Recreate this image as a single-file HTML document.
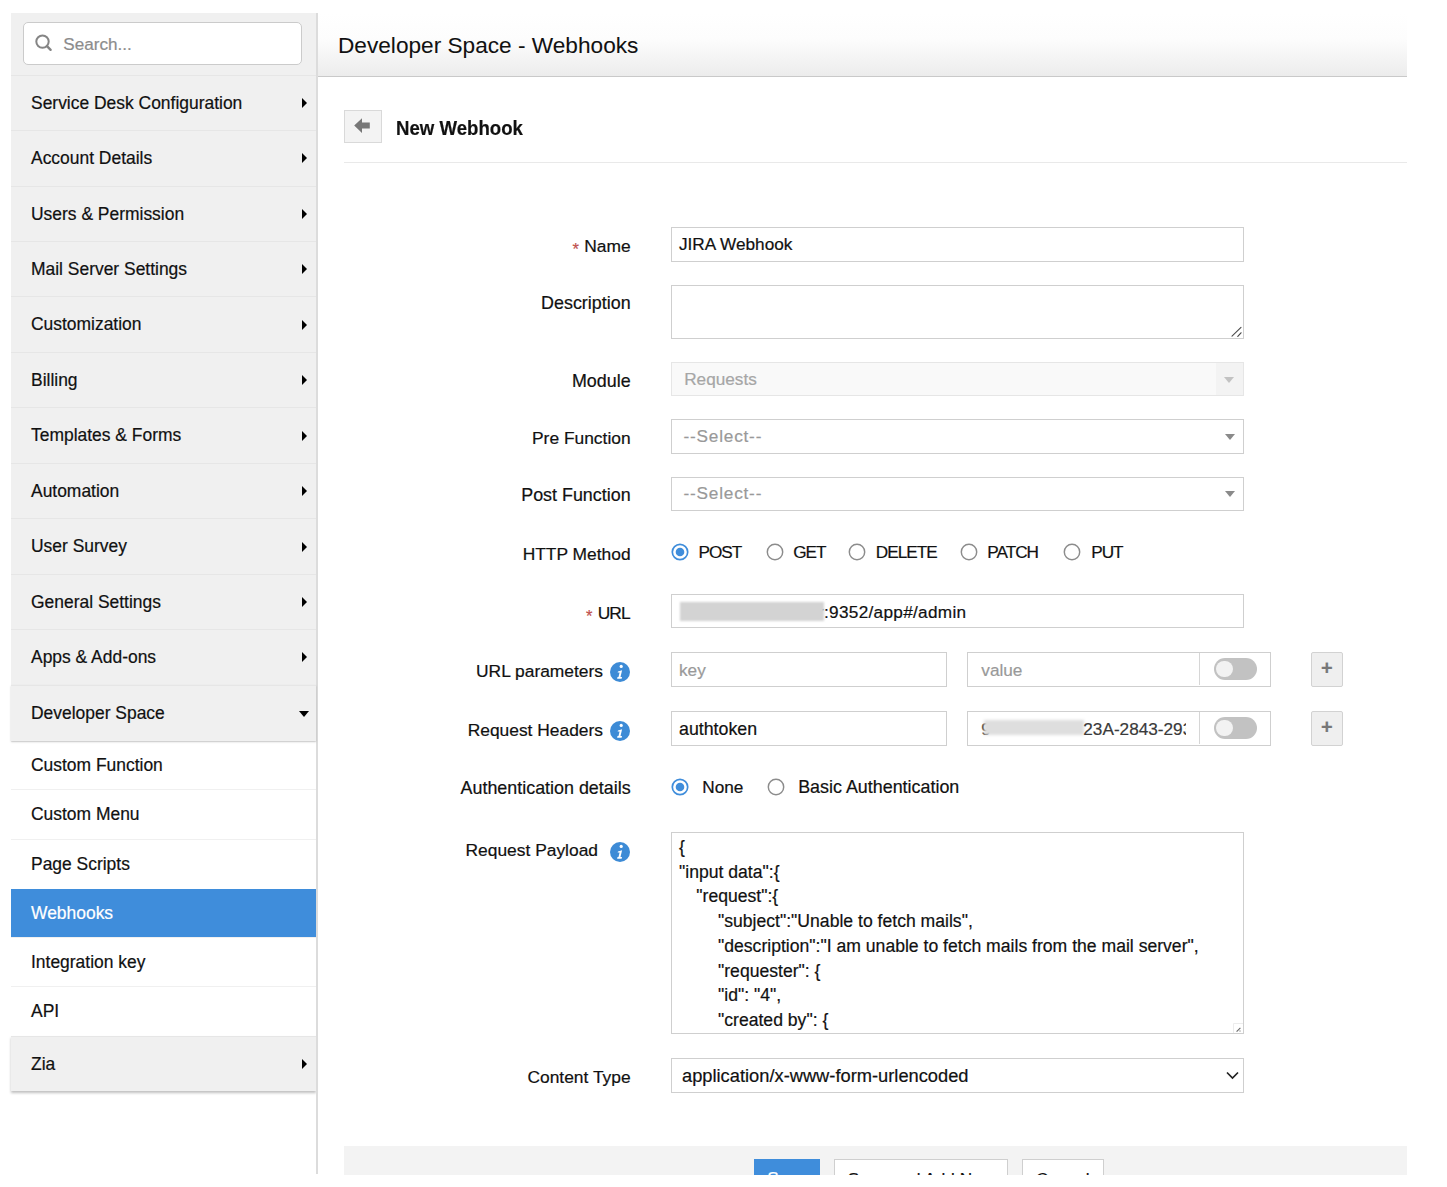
<!DOCTYPE html>
<html><head><meta charset="utf-8">
<style>
*{box-sizing:border-box;margin:0;padding:0}
html,body{width:1447px;height:1187px;overflow:hidden;background:#fff}
body{position:relative;font-family:"Liberation Sans",sans-serif;color:#111;font-size:17.2px;-webkit-text-stroke:0.2px}
.a{position:absolute}
/* sidebar */
#sb{position:absolute;left:11px;top:13px;width:305px;height:1161px;background:#fff}
#vline{position:absolute;left:316px;top:13px;width:2px;height:1161px;background:#dcdcdc}
#search{position:absolute;left:0;top:0;width:305px;height:62px;background:#f0f0f0}
#sbox{position:absolute;left:12px;top:9.3px;width:279.2px;height:43.2px;border:1px solid #cbcbcb;border-radius:5px;background:#fff}
#sbox span{position:absolute;left:39.3px;top:1.5px;line-height:40px;color:#8c8c8c;font-size:17.1px}
.ti{position:absolute;left:0;width:305px;background:#f0f0f0;border-top:1px solid #e6e6e6;padding-left:20px;font-size:17.45px;color:#111}
.ti i{position:absolute;left:290.5px;top:50%;margin-top:-5.2px;width:0;height:0;border-top:5.2px solid transparent;border-bottom:5.2px solid transparent;border-left:5.7px solid #000}
.si{position:absolute;left:0;width:305px;background:#fff;border-top:1px solid #f0f0f0;padding-left:20px;font-size:17.45px;color:#111}
.ti.dev{z-index:2;box-shadow:0 1px 2px rgba(0,0,0,.18)}
.ti b.dn{position:absolute;left:287.8px;top:50%;margin-top:-2.6px;width:0;height:0;border-left:5.5px solid transparent;border-right:5.5px solid transparent;border-top:6.2px solid #000}
.si.act{background:#3f8ddb;color:#fff;border-top-color:#3f8ddb}
.ti.zia{box-shadow:0 1.5px 2.5px rgba(0,0,0,.25)}
/* header */
#hdr{position:absolute;left:318px;top:13px;width:1089px;height:64px;background:linear-gradient(#ffffff 0%,#fdfdfd 40%,#ececec 100%);border-bottom:1px solid #c9c9c9}
#hdr span{position:absolute;left:20px;top:0.5px;line-height:63px;font-size:22.65px;color:#111;-webkit-text-stroke:0.05px}
.lbl{position:absolute;right:816.4px;white-space:nowrap;font-size:17.4px;color:#111;line-height:20px}
.req{color:#c0504d;font-size:16.5px;margin-right:5.2px;position:relative;top:3px}
.inp{position:absolute;left:671px;width:572.5px;border:1px solid #cfcfcf;background:#fff}
.val{position:absolute;left:7px;top:0.3px;white-space:nowrap;font-size:17.2px;color:#111}
.radio{position:absolute;width:18px;height:18px}
.radio svg{display:block}
.rl{position:absolute;white-space:nowrap;font-size:17.2px;color:#111;line-height:20px;margin-top:-0.7px}
.up{letter-spacing:-1px}
.info{position:absolute;width:20px;height:20px}
.info svg{display:block}
.tog{position:absolute;width:42.3px;height:21.5px;border-radius:11px;background:#c2c2c2}
.tog:after{content:"";position:absolute;left:2.2px;top:2.6px;width:16.2px;height:16.2px;border-radius:50%;background:#f2f2f2}
.plus{position:absolute;left:1311px;width:31.8px;height:33.8px;background:#efefef;border:1px solid #d2d2d2;border-radius:2px;color:#777;font-size:20px;font-weight:bold;text-align:center;line-height:31px}
.arr{position:absolute;width:0;height:0;border-left:5.2px solid transparent;border-right:5.2px solid transparent;border-top:6.5px solid #8a8a8a}
</style></head><body>

<div id="sb">
  <div id="search"><div id="sbox">
    <svg class="a" style="left:10px;top:10px" width="20" height="20" viewBox="0 0 20 20"><circle cx="8.5" cy="8.6" r="6.2" fill="none" stroke="#858585" stroke-width="2"/><line x1="13" y1="13.2" x2="16.6" y2="16.8" stroke="#858585" stroke-width="2.4" stroke-linecap="round"/></svg>
    <span>Search...</span></div></div>
<div class="ti" style="top:61.60px;height:56.05px;line-height:54.45px">Service Desk Configuration<i></i></div>
<div class="ti" style="top:117.05px;height:56.05px;line-height:54.45px">Account Details<i></i></div>
<div class="ti" style="top:172.50px;height:56.05px;line-height:54.45px">Users &amp; Permission<i></i></div>
<div class="ti" style="top:227.95px;height:56.05px;line-height:54.45px">Mail Server Settings<i></i></div>
<div class="ti" style="top:283.40px;height:56.05px;line-height:54.45px">Customization<i></i></div>
<div class="ti" style="top:338.85px;height:56.05px;line-height:54.45px">Billing<i></i></div>
<div class="ti" style="top:394.30px;height:56.05px;line-height:54.45px">Templates &amp; Forms<i></i></div>
<div class="ti" style="top:449.75px;height:56.05px;line-height:54.45px">Automation<i></i></div>
<div class="ti" style="top:505.20px;height:56.05px;line-height:54.45px">User Survey<i></i></div>
<div class="ti" style="top:560.65px;height:56.05px;line-height:54.45px">General Settings<i></i></div>
<div class="ti" style="top:616.10px;height:56.05px;line-height:54.45px">Apps &amp; Add-ons<i></i></div>
<div class="ti dev" style="top:671.55px;height:56.45px;line-height:55.45px">Developer Space<b class="dn"></b></div>
<div class="si" style="top:728.00px;height:48.80px;line-height:47.20px">Custom Function</div>
<div class="si" style="top:776.20px;height:50.40px;line-height:48.80px">Custom Menu</div>
<div class="si" style="top:826.00px;height:50.50px;line-height:48.90px">Page Scripts</div>
<div class="si act" style="top:875.90px;height:48.40px;line-height:46.80px">Webhooks</div>
<div class="si" style="top:923.70px;height:50.30px;line-height:48.70px">Integration key</div>
<div class="si" style="top:973.40px;height:50.20px;line-height:48.60px">API</div>
<div class="ti zia" style="top:1023px;height:55px;line-height:54px">Zia<i></i></div>
</div>
<div id="vline"></div>

<div id="hdr"><span>Developer Space - Webhooks</span></div>


<!-- page title -->
<div class="a" style="left:344.3px;top:110.1px;width:37.4px;height:32.7px;background:#f3f3f3;border:1px solid #d9d9d9">
  <svg class="a" style="left:7.5px;top:5.5px" width="18" height="17" viewBox="0 0 18 17"><path d="M1.2 8.6 L9.0 1.3 L9.0 5.4 L16.8 5.4 L16.8 11.6 L9.0 11.6 L9.0 15.9 Z" fill="#777"/></svg>
</div>
<div class="a" style="left:395.5px;top:116px;font-size:20.8px;font-weight:bold;color:#111;line-height:24px;transform:scaleX(0.895);transform-origin:0 0;white-space:nowrap">New Webhook</div>
<div class="a" style="left:344px;top:162px;width:1063px;height:1px;background:#e9e9e9"></div>

<!-- Name -->
<div class="lbl" style="top:235.9px"><span class="req">*</span>Name</div>
<div class="inp" style="top:227.2px;height:34.6px"><span class="val" style="line-height:32px">JIRA Webhook</span></div>

<!-- Description -->
<div class="lbl" style="top:293.4px;font-size:17.9px">Description</div>
<div class="inp" style="top:284.5px;height:54.3px">
  <svg class="a" style="right:1px;bottom:1px" width="12" height="12" viewBox="0 0 12 12"><line x1="2" y1="11.2" x2="11" y2="2.4" stroke="#4a4a4a" stroke-width="1.1" stroke-linecap="round"/><line x1="7.8" y1="11.4" x2="11" y2="7.8" stroke="#4a4a4a" stroke-width="1.2" stroke-linecap="round"/></svg>
</div>

<!-- Module -->
<div class="lbl" style="top:370.9px;font-size:17.9px">Module</div>
<div class="inp" style="top:362.3px;height:34px;background:#f9f9f9;border-color:#e6e6e6">
  <span class="val" style="left:12.2px;top:1.2px;line-height:31px;color:#a6a6a6">Requests</span>
  <div class="a" style="right:0;top:0;width:26.5px;height:32px;background:#f3f3f3"></div>
  <div class="arr" style="left:552.3px;top:13.5px;border-top-color:#c2c2c2"></div>
</div>

<!-- Pre Function -->
<div class="lbl" style="top:427.9px">Pre Function</div>
<div class="inp" style="top:419.3px;height:34.4px">
  <span class="val" style="left:11.5px;top:-0.5px;line-height:32px;color:#999;letter-spacing:0.8px">--Select--</span>
  <div class="arr" style="left:553.2px;top:13.7px"></div>
</div>

<!-- Post Function -->
<div class="lbl" style="top:485.4px;font-size:17.9px">Post Function</div>
<div class="inp" style="top:476.5px;height:34.4px">
  <span class="val" style="left:11.5px;top:-0.5px;line-height:32px;color:#999;letter-spacing:0.8px">--Select--</span>
  <div class="arr" style="left:553.2px;top:13.7px"></div>
</div>

<!-- HTTP Method -->
<div class="lbl" style="top:544.2px">HTTP Method</div>
<div class="radio" style="left:670.9px;top:542.7px"><svg width="18" height="18" viewBox="0 0 18 18"><circle cx="9" cy="9" r="7.7" fill="#fff" stroke="#3f8ddb" stroke-width="1.7"/><circle cx="9" cy="9" r="4.3" fill="#3f8ddb"/></svg></div><div class="rl" style="left:698.5px;top:543px"><span class="up">POST</span></div>
<div class="radio" style="left:765.6px;top:542.7px"><svg width="18" height="18" viewBox="0 0 18 18"><circle cx="9" cy="9" r="7.7" fill="#fff" stroke="#8c8c8c" stroke-width="1.45"/></svg></div><div class="rl" style="left:793.2px;top:543px"><span class="up">GET</span></div>
<div class="radio" style="left:848.3px;top:542.7px"><svg width="18" height="18" viewBox="0 0 18 18"><circle cx="9" cy="9" r="7.7" fill="#fff" stroke="#8c8c8c" stroke-width="1.45"/></svg></div><div class="rl" style="left:875.8px;top:543px"><span class="up">DELETE</span></div>
<div class="radio" style="left:959.5px;top:542.7px"><svg width="18" height="18" viewBox="0 0 18 18"><circle cx="9" cy="9" r="7.7" fill="#fff" stroke="#8c8c8c" stroke-width="1.45"/></svg></div><div class="rl" style="left:987.3px;top:543px"><span class="up">PATCH</span></div>
<div class="radio" style="left:1063.4px;top:542.7px"><svg width="18" height="18" viewBox="0 0 18 18"><circle cx="9" cy="9" r="7.7" fill="#fff" stroke="#8c8c8c" stroke-width="1.45"/></svg></div><div class="rl" style="left:1091.2px;top:543px"><span class="up">PUT</span></div>

<!-- URL -->
<div class="lbl" style="top:602.9px"><span class="req">*</span><span style="letter-spacing:-0.9px;margin-right:0.9px">URL</span></div>
<div class="inp" style="top:594.4px;height:33.4px">
  <span class="val" style="left:146px;line-height:32px;letter-spacing:0.3px">r:9352/app#/admin</span>
  <div class="a" style="left:7.5px;top:6.5px;width:144px;height:19.2px;background:#d3d3d3;filter:blur(1px)"></div>
</div>

<!-- URL parameters -->
<div class="lbl" style="top:661.4px;right:844px">URL parameters</div>
<div class="info" style="left:610.3px;top:662px"><svg width="20" height="20" viewBox="0 0 20 20"><circle cx="10" cy="10" r="10" fill="#3d8bd6"/><circle cx="11.2" cy="4.4" r="1.6" fill="#fff"/><path d="M7.6 10.5 L8.0 9.6 L12.1 8.3 L10.5 14.9 L12.0 14.9 L11.6 16.7 L7.1 16.7 L7.5 14.9 L8.5 14.9 L9.6 10.5 Z" fill="#fff"/></svg></div>
<div class="inp" style="top:652.3px;height:34.3px;width:275.5px"><span class="val" style="line-height:32px;color:#999">key</span></div>
<div class="inp" style="left:967.3px;top:652.3px;height:34.3px;width:303.3px">
  <span class="val" style="left:13px;line-height:32px;color:#999">value</span>
  <div class="a" style="left:231.1px;top:0;width:1px;height:31.8px;background:#d6d6d6"></div>
  <div class="tog" style="left:246px;top:5px"></div>
</div>
<div class="plus" style="top:652.3px;height:34.3px">+</div>

<!-- Request Headers -->
<div class="lbl" style="top:720.4px;right:844px">Request Headers</div>
<div class="info" style="left:610.3px;top:721px"><svg width="20" height="20" viewBox="0 0 20 20"><circle cx="10" cy="10" r="10" fill="#3d8bd6"/><circle cx="11.2" cy="4.4" r="1.6" fill="#fff"/><path d="M7.6 10.5 L8.0 9.6 L12.1 8.3 L10.5 14.9 L12.0 14.9 L11.6 16.7 L7.1 16.7 L7.5 14.9 L8.5 14.9 L9.6 10.5 Z" fill="#fff"/></svg></div>
<div class="inp" style="top:711.3px;height:34.4px;width:275.5px"><span class="val" style="line-height:32px;font-size:17.8px">authtoken</span></div>
<div class="inp" style="left:967.3px;top:711.3px;height:34.4px;width:303.3px;overflow:hidden">
  <span class="val" style="left:13px;line-height:32px;color:#333">9</span>
  <div class="a" style="left:16px;top:7.5px;width:100px;height:15px;background:#dedede;filter:blur(1.5px)"></div>
  <span class="val" style="left:115px;line-height:32px;color:#3a3a3a;width:102.5px;overflow:hidden">23A-2843-2933</span>
  <div class="a" style="left:231.1px;top:0;width:1px;height:31.6px;background:#d6d6d6"></div>
  <div class="tog" style="left:246px;top:5px"></div>
</div>
<div class="plus" style="top:711.3px;height:34.4px">+</div>

<!-- Authentication details -->
<div class="lbl" style="top:778.4px;font-size:17.9px">Authentication details</div>
<div class="radio" style="left:671.0px;top:777.6px"><svg width="18" height="18" viewBox="0 0 18 18"><circle cx="9" cy="9" r="7.7" fill="#fff" stroke="#3f8ddb" stroke-width="1.7"/><circle cx="9" cy="9" r="4.3" fill="#3f8ddb"/></svg></div><div class="rl" style="left:702.3px;top:777.5px">None</div>
<div class="radio" style="left:767.0px;top:777.6px"><svg width="18" height="18" viewBox="0 0 18 18"><circle cx="9" cy="9" r="7.7" fill="#fff" stroke="#8c8c8c" stroke-width="1.45"/></svg></div><div class="rl" style="left:798.2px;top:777.5px;font-size:17.9px">Basic Authentication</div>

<!-- Request Payload -->
<div class="lbl" style="top:840.4px;right:849px">Request Payload</div>
<div class="info" style="left:610.3px;top:841.7px"><svg width="20" height="20" viewBox="0 0 20 20"><circle cx="10" cy="10" r="10" fill="#3d8bd6"/><circle cx="11.2" cy="4.4" r="1.6" fill="#fff"/><path d="M7.6 10.5 L8.0 9.6 L12.1 8.3 L10.5 14.9 L12.0 14.9 L11.6 16.7 L7.1 16.7 L7.5 14.9 L8.5 14.9 L9.6 10.5 Z" fill="#fff"/></svg></div>
<div class="inp" style="top:832.4px;height:201.2px;overflow:hidden">
  <svg class="a" style="right:0;bottom:0" width="10" height="10" viewBox="0 0 10 10"><path d="M0.5 10 V0.5 H10" fill="none" stroke="#ececec" stroke-width="1"/><line x1="3.6" y1="8.6" x2="7.4" y2="4.8" stroke="#666" stroke-width="1.1"/><line x1="6.6" y1="8.4" x2="7.4" y2="7.6" stroke="#777" stroke-width="1.1"/></svg>
  <div class="a" style="left:7px;top:1.6px;line-height:24.72px;font-size:17.6px;white-space:pre;color:#111"><div style="padding-left:0px">{</div><div style="padding-left:0px">"input data":{</div><div style="padding-left:17.3px">"request":{</div><div style="padding-left:39px">"subject":"Unable to fetch mails",</div><div style="padding-left:39px">"description":"I am unable to fetch mails from the mail server",</div><div style="padding-left:39px">"requester": {</div><div style="padding-left:39px">"id": "4",</div><div style="padding-left:39px">"created by": {</div></div>
</div>

<!-- Content Type -->
<div class="lbl" style="top:1066.9px">Content Type</div>
<div class="inp" style="top:1058.3px;height:34.4px">
  <span class="val" style="left:10px;top:0.5px;line-height:32px;font-size:18.3px">application/x-www-form-urlencoded</span>
  <svg class="a" style="left:554px;top:11.5px" width="13" height="9" viewBox="0 0 13 9"><path d="M1 1.5 L6.5 7 L12 1.5" fill="none" stroke="#222" stroke-width="1.7"/></svg>
</div>

<!-- footer -->
<div class="a" style="left:344px;top:1145.7px;width:1063px;height:28.9px;background:#f3f3f3;overflow:hidden">
  <div class="a" style="left:409.8px;top:13.3px;width:66.2px;height:34px;background:#3f8ddb;color:#fff;text-align:center;line-height:38.6px;font-size:17.2px">Save</div>
  <div class="a" style="left:490px;top:13.3px;width:173.9px;height:34px;background:#fff;border:1px solid #cfcfcf;text-align:center;line-height:38.6px;font-size:17.2px">Save and Add New</div>
  <div class="a" style="left:677.9px;top:13.3px;width:81.8px;height:34px;background:#fff;border:1px solid #cfcfcf;text-align:center;line-height:38.6px;font-size:17.2px">Cancel</div>
</div>

</body></html>
